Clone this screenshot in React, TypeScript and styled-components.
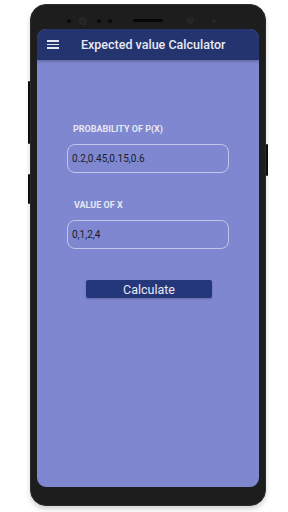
import styled, { createGlobalStyle } from 'styled-components';

const GlobalStyle = createGlobalStyle`
  html, body {
    margin: 0;
    padding: 0;
    background: #ffffff;
  }
  body {
    font-family: Roboto, 'Liberation Sans', sans-serif;
  }
`;

const Stage = styled.div`
  width: 288px;
  height: 512px;
  padding: 4px 0 0 30px;
  box-sizing: border-box;
`;

const Phone = styled.div`
  position: relative;
  width: 236px;
  height: 502px;
  box-sizing: border-box;
  padding: 0 6px;
  border-radius: 16px;
  background: #1d1d1e;
  border: 1px solid #2c2c2e;
  box-shadow: 0 3px 5px rgba(0, 0, 0, 0.18);
  display: flex;
  flex-direction: column;
`;

const SideKey = styled.div<{ $side: 'left' | 'right'; $top: number; $h: number }>`
  position: absolute;
  ${(p) => (p.$side === 'left' ? 'left: -3px;' : 'right: -3px;')}
  top: ${(p) => p.$top}px;
  width: 2px;
  height: ${(p) => p.$h}px;
  background: #0c0c0c;
  border-radius: 1px;
`;

const Bezel = styled.div`
  height: 24px;
  display: flex;
  align-items: center;
  padding: 7px 0 0 30px;
  box-sizing: border-box;
`;

const Dot = styled.span<{ $size: number; $ml: number; $ring?: boolean; $faint?: boolean }>`
  width: ${(p) => p.$size}px;
  height: ${(p) => p.$size}px;
  margin-left: ${(p) => p.$ml}px;
  border-radius: 50%;
  flex-shrink: 0;
  box-sizing: border-box;
  background: ${(p) => (p.$ring ? '#232325' : '#0b0b0b')};
  border: ${(p) => (p.$ring ? `1px solid ${p.$faint ? '#2a2a2c' : '#2e2e30'}` : 'none')};
`;

const Speaker = styled.span`
  width: 30px;
  height: 3px;
  margin-left: 21px;
  border-radius: 2px;
  background: #080808;
`;

const Screen = styled.div`
  height: 458px;
  border-radius: 9px;
  overflow: hidden;
  background: #7e87cf;
  display: flex;
  flex-direction: column;
`;

const AppBar = styled.div`
  height: 31px;
  flex-shrink: 0;
  background: #24346f;
  box-shadow: 0 1px 3px rgba(0, 0, 0, 0.3);
  display: flex;
  align-items: center;
  padding-left: 10px;
  gap: 22px;
`;

const Burger = styled.div`
  width: 12px;
  display: flex;
  flex-direction: column;
  gap: 2px;
  span {
    height: 1.5px;
    background: #e4e6f2;
  }
`;

const Title = styled.div`
  color: #e8eaf4;
  font-size: 12.5px;
  font-weight: 500;
  white-space: nowrap;
`;

const Content = styled.div`
  padding: 64px 30px 0;
  display: flex;
  flex-direction: column;
`;

const Label = styled.div<{ $ml: number }>`
  margin-left: ${(p) => p.$ml}px;
  color: #e6e7f1;
  font-size: 9px;
  font-weight: 700;
  line-height: 10px;
  height: 10px;
`;

const Field = styled.div<{ $mb: number }>`
  margin-top: 10px;
  margin-bottom: ${(p) => p.$mb}px;
  height: 29px;
  box-sizing: border-box;
  border: 1px solid #c3c7e8;
  border-radius: 8px;
  padding-left: 4px;
  display: flex;
  align-items: center;
  color: #1c1c28;
  font-size: 10px;
`;

const Button = styled.div`
  align-self: flex-start;
  margin-left: 19px;
  width: 126px;
  height: 18px;
  border-radius: 2px;
  background: #25377b;
  box-shadow: 0 1px 2px rgba(0, 0, 0, 0.2);
  color: #e8eaf5;
  font-size: 12.5px;
  display: flex;
  align-items: center;
  justify-content: center;
`;

export default function App() {
  return (
    <>
      <GlobalStyle />
      <Stage>
        <Phone>
          <SideKey $side="left" $top={76} $h={63} />
          <SideKey $side="left" $top={169} $h={30} />
          <SideKey $side="right" $top={139} $h={32} />
          <Bezel>
            <Dot $size={4} $ml={0} />
            <Dot $size={8} $ml={8} $ring />
            <Dot $size={4} $ml={10} />
            <Dot $size={4} $ml={7} />
            <Speaker />
            <Dot $size={7} $ml={24} $ring $faint />
            <Dot $size={4} $ml={18} $ring $faint />
          </Bezel>
          <Screen>
            <AppBar>
              <Burger>
                <span />
                <span />
                <span />
              </Burger>
              <Title>Expected value Calculator</Title>
            </AppBar>
            <Content>
              <Label $ml={6}>PROBABILITY OF P(X)</Label>
              <Field $mb={27}>0.2,0.45,0.15,0.6</Field>
              <Label $ml={7}>VALUE OF X</Label>
              <Field $mb={31}>0,1,2,4</Field>
              <Button>Calculate</Button>
            </Content>
          </Screen>
        </Phone>
      </Stage>
    </>
  );
}
